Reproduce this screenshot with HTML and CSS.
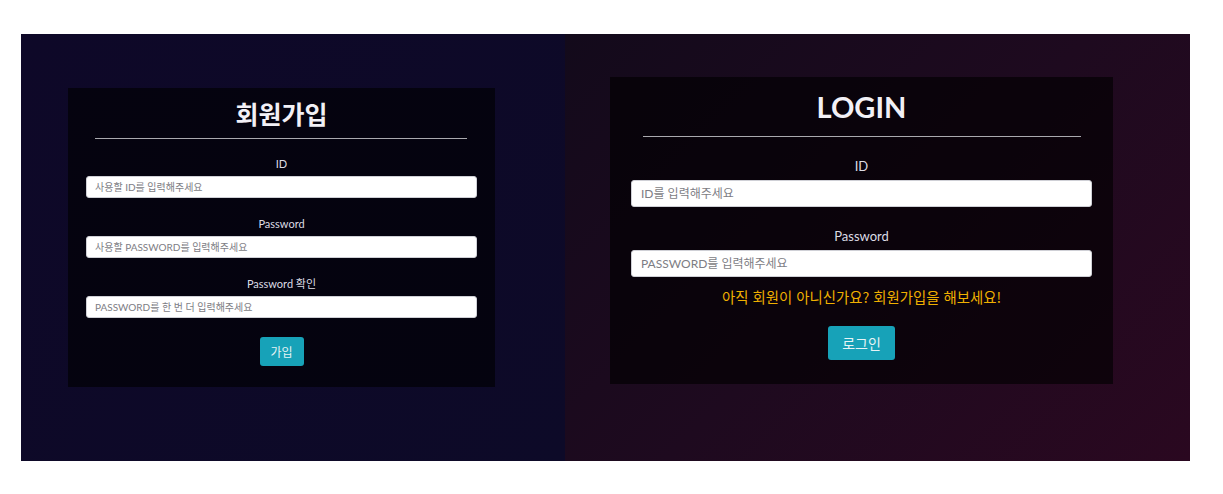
FILE: index.html
```html
<!DOCTYPE html>
<html lang="ko">
<head>
<meta charset="utf-8">
<title>회원가입 / LOGIN</title>
<link rel="stylesheet" href="styles.css">
</head>
<body>
<div class="stage">
  <section class="panel panel-join">
    <form class="card card-join">
      <h2 class="title title-join">회원가입</h2>
      <hr class="rule">
      <div class="fields">
        <div class="group">
          <label class="label">ID</label>
          <input class="input" type="text" placeholder="사용할 ID를 입력해주세요">
        </div>
        <div class="group">
          <label class="label">Password</label>
          <input class="input" type="password" placeholder="사용할 PASSWORD를 입력해주세요">
        </div>
        <div class="group">
          <label class="label">Password 확인</label>
          <input class="input" type="password" placeholder="PASSWORD를 한 번 더 입력해주세요">
        </div>
        <button class="btn btn-join" type="button">가입</button>
      </div>
    </form>
  </section>
  <section class="panel panel-login">
    <form class="card card-login">
      <h2 class="title title-login">LOGIN</h2>
      <hr class="rule">
      <div class="fields">
        <div class="group">
          <label class="label">ID</label>
          <input class="input" type="text" placeholder="ID를 입력해주세요">
        </div>
        <div class="group">
          <label class="label">Password</label>
          <input class="input" type="password" placeholder="PASSWORD를 입력해주세요">
        </div>
        <p class="hint">아직 회원이 아니신가요? 회원가입을 해보세요!</p>
        <button class="btn btn-login" type="button">로그인</button>
      </div>
    </form>
  </section>
</div>
</body>
</html>
```
FILE: styles.css
```css
* { box-sizing: border-box; }
html, body { margin: 0; padding: 0; background: #ffffff; }
body {
  font-family: Lato, "Noto Sans CJK KR", sans-serif;
  padding: 34px 0 0 21px;
}
.stage {
  display: grid;
  grid-template-columns: 544px 625px;
  height: 427px;
  width: 1169px;
}
.panel { display: flex; align-items: flex-start; }
.panel-join {
  background: linear-gradient(135deg, #0e0828 0%, #0d0a28 100%);
  padding: 54px 0 0 47px;
}
.panel-login {
  background: linear-gradient(135deg, #130a1b 0%, #1e0a1f 50%, #2a0820 100%);
  padding: 43px 0 0 45px;
}
.card {
  background: rgba(0, 0, 0, 0.62);
  display: flex;
  flex-direction: column;
}
.card-join { width: 427px; height: 299px; padding: 8px 0 0 0; }
.card-login { width: 503px; height: 307px; padding: 12px 0 0 0; }
.title {
  margin: 0;
  text-align: center;
  color: #f2f0f6;
  font-weight: 700;
}
.title-join {
  font-family: "Noto Sans CJK KR", sans-serif;
  font-size: 25px;
  line-height: 34px;
}
.title-login {
  font-size: 29px;
  line-height: 36px;
}
.rule {
  border: 0;
  height: 1px;
  background: #a9a9ae;
  margin: 0;
}
.card-join .rule { margin: 8px 28px 0 27px; }
.card-login .rule { margin: 11px 32px 0 33px; }
.fields { display: flex; flex-direction: column; align-items: center; }
.card-join .fields { padding: 0 18px; margin-top: 17px; }
.card-login .fields { padding: 0 21px; margin-top: 20px; }
.group { display: flex; flex-direction: column; align-items: center; width: 100%; }
.card-join .group + .group { margin-top: 18px; }
.card-login .group + .group { margin-top: 20px; }
.label {
  color: #dcdce4;
  text-align: center;
}
.card-join .label { font-size: 11px; line-height: 16px; margin-bottom: 4px; }
.card-login .label { font-size: 13px; line-height: 18px; margin-bottom: 5px; }
.input {
  width: 100%;
  background: #ffffff;
  border: 1px solid #cfd0d6;
  border-radius: 3px;
  font-family: Lato, "Noto Sans CJK KR", sans-serif;
  color: #333;
  outline: none;
}
.input::placeholder { color: #7d7d84; opacity: 1; }
.card-join .input { height: 22px; font-size: 10px; padding: 0 8px; }
.card-login .input { height: 27px; font-size: 12px; padding: 0 9px; }
.hint {
  margin: 10px 0 0 0;
  color: #f0b000;
  font-family: "Noto Sans CJK KR", sans-serif;
  font-size: 14.4px;
  line-height: 20px;
  text-align: center;
}
.btn {
  border: 0;
  background: #17a2b8;
  color: #e6f3f5;
  border-radius: 3px;
  font-family: "Noto Sans CJK KR", sans-serif;
  cursor: pointer;
}
.btn-join { margin-top: 19px; width: 44px; height: 29px; font-size: 12px; padding: 0; }
.btn-login { margin-top: 19px; width: 67px; height: 34px; font-size: 14px; padding: 0; }
```
